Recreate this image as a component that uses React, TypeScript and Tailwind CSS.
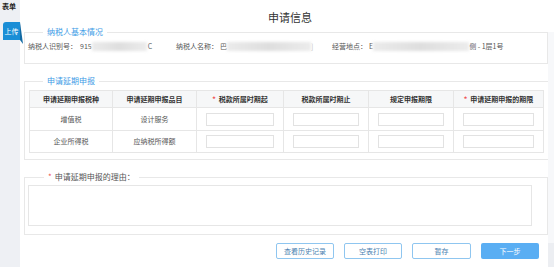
import React from "react";

const font = "font-['Noto_Sans_CJK_SC','Noto_Sans',sans-serif]";

function Blur({ w }: { w: number }) {
	return (
		<span
			className="inline-block h-[9px] bg-gradient-to-r from-[#ebebeb] via-[#dedede] to-[#ececec] blur-[1.5px]"
			style={{ width: w }}
		/>
	);
}

function Star() {
	return <span className="text-[#f05050] mr-[3px]">*</span>;
}

const cols = ["w-[83px]", "w-[84px]", "w-[87px]", "w-[85px]", "w-[85px]", "w-[90px]"];

function InputCell() {
	return (
		<td className="border border-[#e6e6e6] px-[9px]">
			<div className="h-[13px] w-full border border-[#e2e2e2] bg-white" />
		</td>
	);
}

export default function App() {
	return (
		<div className={`w-[554px] h-[267px] flex bg-white overflow-hidden ${font}`}>
			{/* side tabs */}
			<aside className="w-[20px] bg-[#eef0f4] flex flex-col shrink-0">
				<div className="h-[22px] pl-[2px] pt-[1px] text-[7px] leading-[10px] font-bold text-[#222]">表单</div>
				<div className="relative ml-[3px] w-[17px] h-[18px] bg-[#1a8ed6] rounded-tl-[3px] flex items-center justify-center text-[7px] text-white">
					上传
					<svg className="absolute left-[17px] top-0" width="3" height="22" viewBox="0 0 3 22">
						<polygon points="0,0 0,18 3,22" fill="#126aa3" />
					</svg>
				</div>
			</aside>

			<main className="w-[528px] flex flex-col pl-[4px] text-[#555]">
				<h1 className="h-[27px] pt-[10px] text-center text-[11px] leading-[14px] text-[#333] pl-[8px]">申请信息</h1>

				{/* 纳税人基本情况 */}
				<fieldset className="h-[37px] border border-[#e8e8e8]">
					<legend className="ml-[18px] px-[4px] text-[8px] leading-[10px] text-[#3c9be6]">纳税人基本情况</legend>
					<div className="flex items-center pt-[5px] pl-[3px] text-[7px] leading-[9px]">
						<div className="w-[148px] flex items-center">
							<span>纳税人识别号：</span>
							<span className="ml-[3px]">915</span>
							<Blur w={55} />
							<span className="ml-[1px]">C</span>
						</div>
						<div className="w-[156px] flex items-center">
							<span>纳税人名称：</span>
							<span className="ml-[2px]">巴</span>
							<Blur w={84} />
							<span className="text-[#bbb]">]</span>
						</div>
						<div className="flex items-center">
							<span>经营地点：</span>
							<span className="ml-[2px]">E</span>
							<Blur w={96} />
							<span>侧 - 1层1号</span>
						</div>
					</div>
				</fieldset>

				{/* 申请延期申报 */}
				<fieldset className="mt-[12px] h-[84px] border border-[#e8e8e8] px-[4px]">
					<legend className="ml-[14px] px-[4px] text-[8px] leading-[10px] text-[#3c9be6]">申请延期申报</legend>
					<table className="mt-[4px] w-[514px] border-collapse table-fixed text-[7px] text-center">
						<colgroup>
							{cols.map((c, i) => (
								<col key={i} className={c} />
							))}
						</colgroup>
						<thead>
							<tr className="h-[17px] bg-[#f6f7f8] text-[#333] font-bold">
								<th className="border border-[#e6e6e6]">申请延期申报税种</th>
								<th className="border border-[#e6e6e6]">申请延期申报品目</th>
								<th className="border border-[#e6e6e6]"><Star />税款所属时期起</th>
								<th className="border border-[#e6e6e6]">税款所属时期止</th>
								<th className="border border-[#e6e6e6]">规定申报期限</th>
								<th className="border border-[#e6e6e6]"><Star />申请延期申报的期限</th>
							</tr>
						</thead>
						<tbody>
							<tr className="h-[23px]">
								<td className="border border-[#e6e6e6]">增值税</td>
								<td className="border border-[#e6e6e6]">设计服务</td>
								<InputCell />
								<InputCell />
								<InputCell />
								<InputCell />
							</tr>
							<tr className="h-[22px]">
								<td className="border border-[#e6e6e6]">企业所得税</td>
								<td className="border border-[#e6e6e6]">应纳税所得额</td>
								<InputCell />
								<InputCell />
								<InputCell />
								<InputCell />
							</tr>
						</tbody>
					</table>
				</fieldset>

				{/* 理由 */}
				<fieldset className="mt-[12px] h-[63px] border border-[#e8e8e8]">
					<legend className="ml-[19px] px-[4px] text-[8px] leading-[10px] text-[#555]">
						<Star />申请延期申报的理由：
					</legend>
					<div className="mt-[3px] ml-[3px] mr-[15px] h-[41px] border border-[#e6e6e6]" />
				</fieldset>

				<div className="mt-[8px] flex justify-end gap-[10px] pr-[9px] text-[7px]">
					<button className="w-[58px] h-[16px] border border-[#8fc6f0] rounded-[2px] text-[#4a7fb0]">查看历史记录</button>
					<button className="w-[58px] h-[16px] border border-[#8fc6f0] rounded-[2px] text-[#4a7fb0]">空表打印</button>
					<button className="w-[59px] h-[16px] border border-[#8fc6f0] rounded-[2px] text-[#4a7fb0]">暂存</button>
					<button className="w-[58px] h-[16px] rounded-[2px] bg-[#5aaef3] text-white">下一步</button>
				</div>
			</main>

			<div className="w-[6px] flex flex-col">
				<div className="h-[32px] bg-white" />
				<div className="h-[211px] bg-[#f7f8fa]" />
				<div className="flex-1 bg-[#eceef2]" />
			</div>
		</div>
	);
}
